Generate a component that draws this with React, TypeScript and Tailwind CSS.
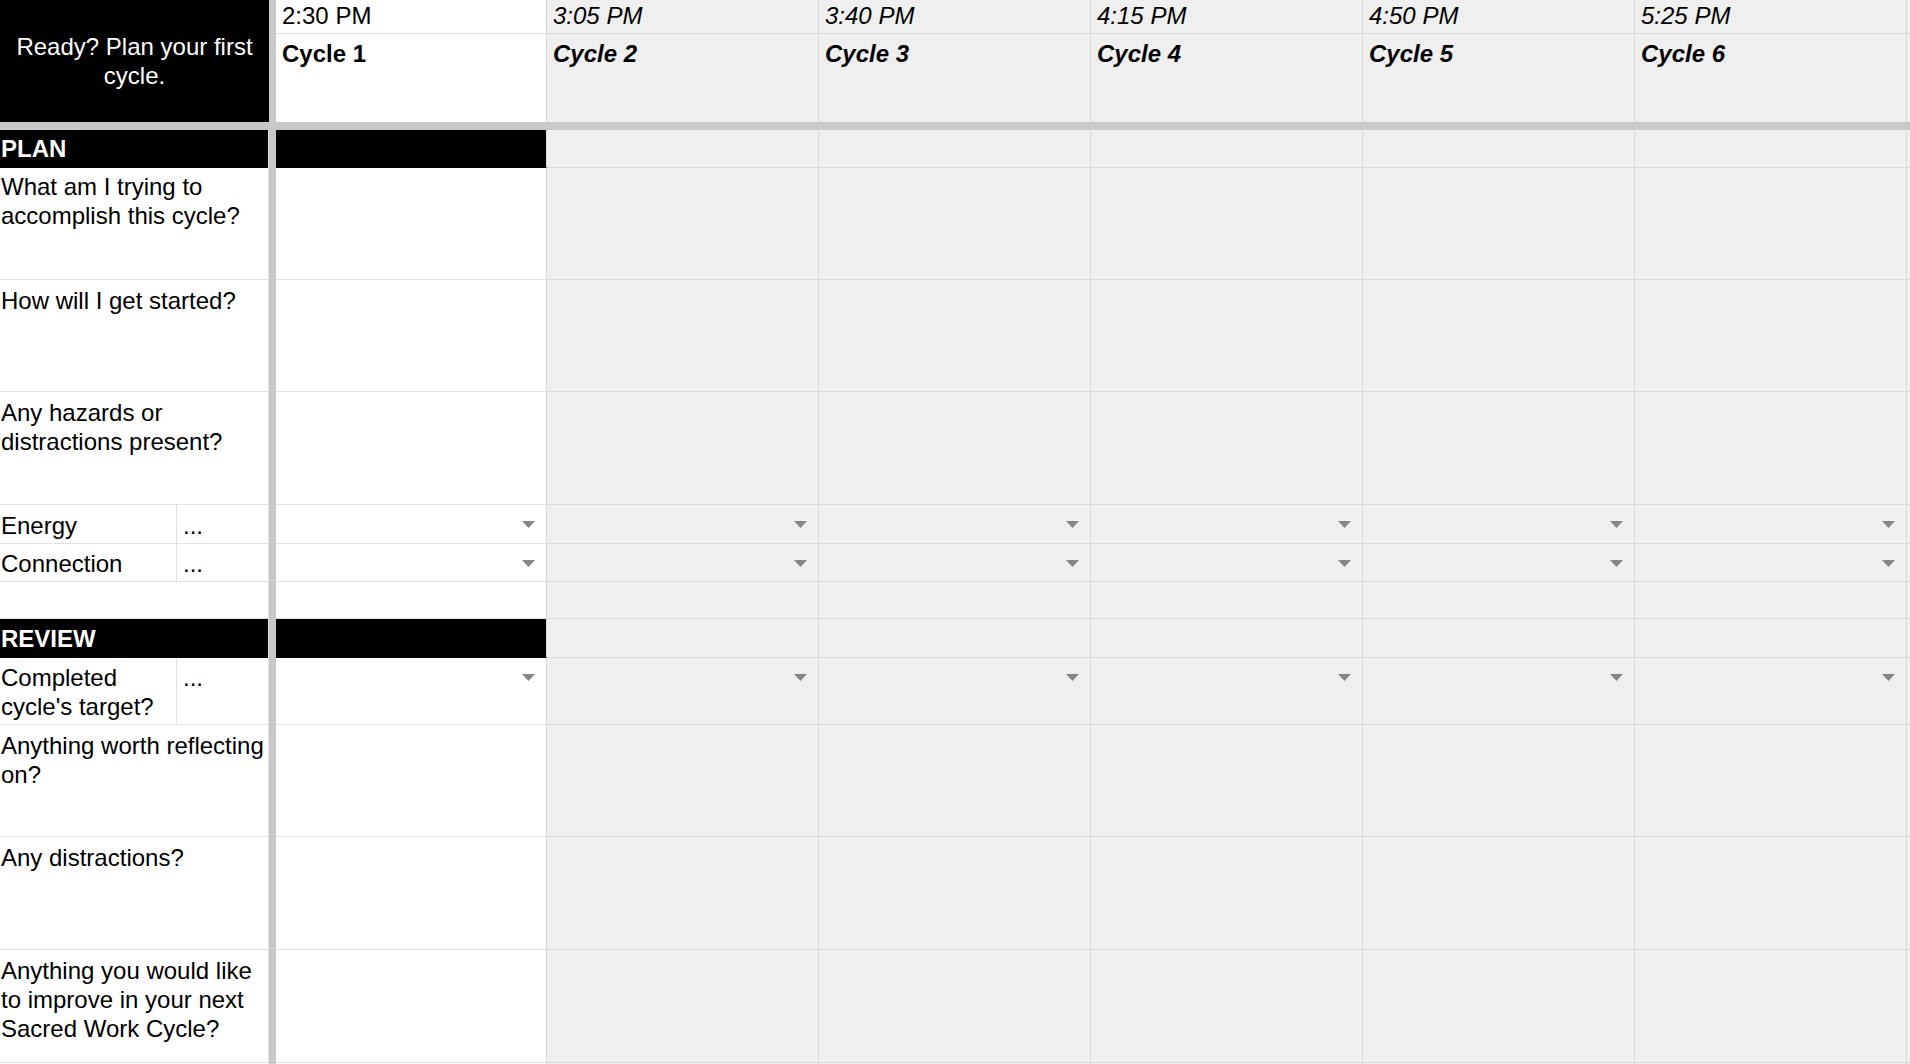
import React from 'react';

interface Cycle {
  time: string;
  name: string;
}

type RowKind = 'section' | 'question' | 'select' | 'blank';

interface RowDef {
  kind: RowKind;
  label?: string;
  height: string;
  pad?: string;
}

const cycles: Cycle[] = [
  { time: '2:30 PM', name: 'Cycle 1' },
  { time: '3:05 PM', name: 'Cycle 2' },
  { time: '3:40 PM', name: 'Cycle 3' },
  { time: '4:15 PM', name: 'Cycle 4' },
  { time: '4:50 PM', name: 'Cycle 5' },
  { time: '5:25 PM', name: 'Cycle 6' },
];

const rows: RowDef[] = [
  { kind: 'section', label: 'PLAN', height: 'h-[38px]', pad: 'pb-[2px]' },
  { kind: 'question', label: 'What am I trying to accomplish this cycle?', height: 'h-[112px]', pad: 'pt-[4px]' },
  { kind: 'question', label: 'How will I get started?', height: 'h-[112px]', pad: 'pt-[6px]' },
  { kind: 'question', label: 'Any hazards or distractions present?', height: 'h-[113px]', pad: 'pt-[6px]' },
  { kind: 'select', label: 'Energy', height: 'h-[39px]', pad: 'pt-[6px]' },
  { kind: 'select', label: 'Connection', height: 'h-[38px]', pad: 'pt-[5px]' },
  { kind: 'blank', height: 'h-[37px]' },
  { kind: 'section', label: 'REVIEW', height: 'h-[39px]', pad: 'pb-[1px]' },
  { kind: 'select', label: "Completed cycle's target?", height: 'h-[67px]', pad: 'pt-[5px]' },
  { kind: 'question', label: 'Anything worth reflecting on?', height: 'h-[112px]', pad: 'pt-[6px]' },
  { kind: 'question', label: 'Any distractions?', height: 'h-[113px]', pad: 'pt-[6px]' },
  {
    kind: 'question',
    label: 'Anything you would like to improve in your next Sacred Work Cycle?',
    height: 'h-[113px]',
    pad: 'pt-[6px]',
  },
  { kind: 'blank', height: 'h-[112px]' },
];

const DropArrow: React.FC = () => (
  <svg width="13" height="7" viewBox="0 0 13 7" className="block">
    <polygon points="0,0 13,0 6.5,7" fill="#858585" />
  </svg>
);

const LabelCell: React.FC<{ row: RowDef }> = ({ row }) => {
  if (row.kind === 'section') {
    return (
      <div
        className={`w-[269px] shrink-0 bg-black text-white font-bold flex items-center pl-[1px] border-r border-[#e2e2e2] ${row.pad}`}
      >
        {row.label}
      </div>
    );
  }

  if (row.kind === 'select') {
    return (
      <div className="w-[269px] shrink-0 flex bg-white border-r border-b border-[#e2e2e2]">
        <div className={`w-[177px] shrink-0 border-r border-[#e2e2e2] pl-[1px] ${row.pad}`}>{row.label}</div>
        <div className={`flex-1 pl-[6px] ${row.pad}`}>...</div>
      </div>
    );
  }

  return (
    <div className={`w-[269px] shrink-0 bg-white border-r border-b border-[#e2e2e2] pl-[1px] ${row.pad ?? ''}`}>
      {row.label}
    </div>
  );
};

const GridRow: React.FC<{ row: RowDef }> = ({ row }) => {
  const isSection = row.kind === 'section';
  const hasArrow = row.kind === 'select';

  return (
    <div className={`flex shrink-0 ${row.height}`}>
      <LabelCell row={row} />
      <div className="w-[7px] shrink-0 bg-[#c8c8c8]" />

      {/* first cycle column is the active one */}
      <div
        className={`w-[271px] shrink-0 border-r border-[#d9d9d9] border-b ${
          isSection ? 'bg-black border-b-black' : 'bg-white border-b-[#e2e2e2]'
        }`}
      >
        {hasArrow && (
          <div className="flex justify-end pr-[11px] pt-[16px]">
            <DropArrow />
          </div>
        )}
      </div>

      {cycles.slice(1).map((c) => (
        <div key={c.name} className="w-[272px] shrink-0 bg-[#efefef] border-r border-b border-[#d9d9d9]">
          {hasArrow && (
            <div className="flex justify-end pr-[11px] pt-[16px]">
              <DropArrow />
            </div>
          )}
        </div>
      ))}

      <div className="flex-1 bg-[#efefef] border-b border-[#d9d9d9]" />
    </div>
  );
};

export default function App() {
  return (
    <div
      className="w-[1910px] h-[1064px] overflow-hidden bg-white text-black text-[24px] leading-[29px] flex flex-col"
      style={{ fontFamily: '"Liberation Sans", Arial, sans-serif' }}
    >
      {/* header */}
      <div className="flex h-[122px] shrink-0">
        <div className="w-[269px] shrink-0 bg-black text-white flex items-center justify-center text-center px-[8px]">
          Ready? Plan your first cycle.
        </div>
        <div className="w-[7px] shrink-0 bg-[#c8c8c8]" />

        {cycles.map((c, i) => (
          <div
            key={c.name}
            className={`shrink-0 flex flex-col border-r border-[#d9d9d9] ${
              i === 0 ? 'w-[271px] bg-white' : 'w-[272px] bg-[#efefef] italic'
            }`}
          >
            <div
              className={`h-[34px] shrink-0 border-b pl-[6px] pt-[1px] ${
                i === 0 ? 'border-[#e2e2e2]' : 'border-[#d9d9d9]'
              }`}
            >
              {c.time}
            </div>
            <div className="flex-1 pl-[6px] pt-[5px] font-bold">{c.name}</div>
          </div>
        ))}

        <div className="flex-1 flex flex-col bg-[#efefef]">
          <div className="h-[34px] shrink-0 border-b border-[#d9d9d9]" />
        </div>
      </div>

      <div className="h-[8px] shrink-0 bg-[#c8c8c8]" />

      {rows.map((row, i) => (
        <GridRow key={i} row={row} />
      ))}
    </div>
  );
}
